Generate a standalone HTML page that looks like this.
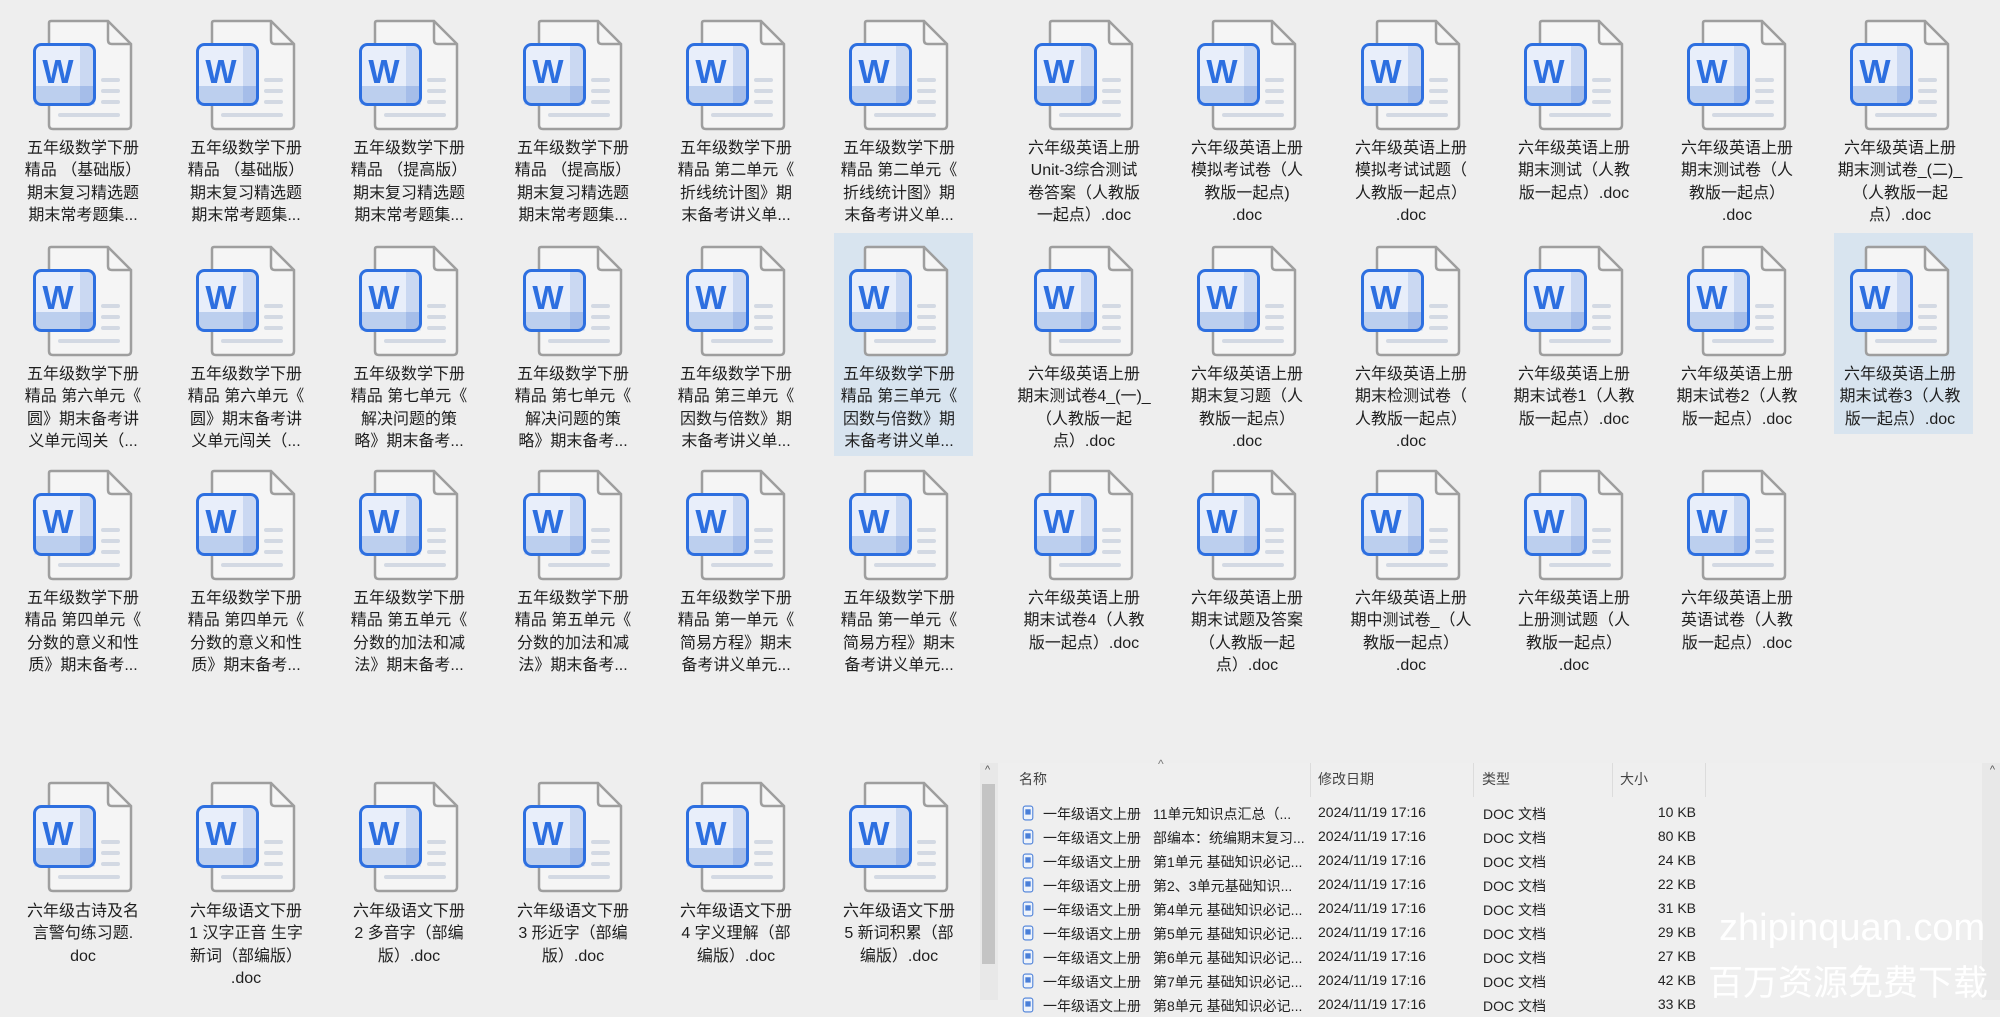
<!DOCTYPE html>
<html><head><meta charset="utf-8"><style>
html,body{margin:0;padding:0;}
body{width:2000px;height:1000px;background:#eeeeee;position:relative;overflow:hidden;font-family:"Liberation Sans","Noto Sans CJK SC",sans-serif;}
.t{position:absolute;width:150px;}
.t svg{position:absolute;left:28px;width:100px;height:112px;}
.t .l{position:absolute;left:0;width:156px;text-align:center;font-size:16px;line-height:22.3px;color:#1e1e1e;white-space:nowrap;}
.sel{position:absolute;background:#d8e4ef;}
.panel{position:absolute;left:980px;top:763px;width:1020px;height:237px;background:#efefef;}
.hd{position:absolute;top:6px;font-size:14px;color:#444;}
.sep{position:absolute;top:0;width:1px;height:34px;background:#dcdcdc;}
.row{position:absolute;left:0;width:1000px;height:24px;font-size:14px;color:#222;white-space:nowrap;}
.row span{position:absolute;top:3px;}
.row .sz{right:284px;}
.wm{position:absolute;color:#fff;font-family:"Liberation Sans","Noto Sans CJK SC",sans-serif;white-space:nowrap;}
</style></head><body>
<svg width="0" height="0" style="position:absolute">
<defs>
<symbol id="ic" viewBox="0 0 100 112">
<path d="M18 2 H75 L98 25 V106 Q98 110 94 110 H20 Q16 110 16 106 V4 Q16 2 18 2 Z" fill="#f5f5f5" stroke="#9e9e9e" stroke-width="2.5"/>
<path d="M75 2 V21 Q75 25 79 25 H98" fill="none" stroke="#9e9e9e" stroke-width="2.5"/>
<g stroke="#d3d9e3" stroke-width="4" stroke-linecap="round"><line x1="70" y1="61" x2="85" y2="61"/><line x1="70" y1="72" x2="85" y2="72"/><line x1="70" y1="83" x2="85" y2="83"/><line x1="27" y1="96" x2="85" y2="96"/></g>
<rect x="1.5" y="25.5" width="60" height="60" rx="7" fill="#e8eefa"/>
<rect x="1.5" y="67" width="60" height="18.5" fill="#bccfee"/>
<rect x="47" y="27" width="13" height="57" fill="#cad8f2"/>
<rect x="47" y="67" width="13" height="18" fill="#a5bde9"/>
<rect x="1.5" y="25.5" width="60" height="60" rx="7" fill="none" stroke="#2d6fe0" stroke-width="3"/>
<text x="25" y="64" text-anchor="middle" font-family="Liberation Sans,sans-serif" font-weight="bold" font-size="33" fill="#2d6fe0">W</text>
</symbol>
<symbol id="si" viewBox="0 0 11 15"><rect x="1" y="1" width="9" height="13" rx="2" fill="#eef3fb" stroke="#4a7fd8"/><rect x="3" y="4" width="5" height="5" fill="#4a7fd8"/></symbol>
</defs></svg>

<div class="sel" style="left:834px;top:233px;width:139px;height:223px"></div>
<div class="sel" style="left:1834px;top:233px;width:139px;height:201px"></div>

<!-- Row 1 -->
<div class="t" style="left:5px;top:19px"><svg><use href="#ic"/></svg><div class="l" style="top:119px">五年级数学下册<br>精品 （基础版）<br>期末复习精选题<br>期末常考题集...</div></div>
<div class="t" style="left:168px;top:19px"><svg><use href="#ic"/></svg><div class="l" style="top:119px">五年级数学下册<br>精品 （基础版）<br>期末复习精选题<br>期末常考题集...</div></div>
<div class="t" style="left:331px;top:19px"><svg><use href="#ic"/></svg><div class="l" style="top:119px">五年级数学下册<br>精品 （提高版）<br>期末复习精选题<br>期末常考题集...</div></div>
<div class="t" style="left:495px;top:19px"><svg><use href="#ic"/></svg><div class="l" style="top:119px">五年级数学下册<br>精品 （提高版）<br>期末复习精选题<br>期末常考题集...</div></div>
<div class="t" style="left:658px;top:19px"><svg><use href="#ic"/></svg><div class="l" style="top:119px">五年级数学下册<br>精品 第二单元《<br>折线统计图》期<br>末备考讲义单...</div></div>
<div class="t" style="left:821px;top:19px"><svg><use href="#ic"/></svg><div class="l" style="top:119px">五年级数学下册<br>精品 第二单元《<br>折线统计图》期<br>末备考讲义单...</div></div>
<div class="t" style="left:1006px;top:19px"><svg><use href="#ic"/></svg><div class="l" style="top:119px">六年级英语上册<br>Unit-3综合测试<br>卷答案（人教版<br>一起点）.doc</div></div>
<div class="t" style="left:1169px;top:19px"><svg><use href="#ic"/></svg><div class="l" style="top:119px">六年级英语上册<br>模拟考试卷（人<br>教版一起点)<br>.doc</div></div>
<div class="t" style="left:1333px;top:19px"><svg><use href="#ic"/></svg><div class="l" style="top:119px">六年级英语上册<br>模拟考试试题（<br>人教版一起点）<br>.doc</div></div>
<div class="t" style="left:1496px;top:19px"><svg><use href="#ic"/></svg><div class="l" style="top:119px">六年级英语上册<br>期末测试（人教<br>版一起点）.doc</div></div>
<div class="t" style="left:1659px;top:19px"><svg><use href="#ic"/></svg><div class="l" style="top:119px">六年级英语上册<br>期末测试卷（人<br>教版一起点）<br>.doc</div></div>
<div class="t" style="left:1822px;top:19px"><svg><use href="#ic"/></svg><div class="l" style="top:119px">六年级英语上册<br>期末测试卷_(二)_<br>（人教版一起<br>点）.doc</div></div>

<!-- Row 2 -->
<div class="t" style="left:5px;top:245px"><svg><use href="#ic"/></svg><div class="l" style="top:119px">五年级数学下册<br>精品 第六单元《<br>圆》期末备考讲<br>义单元闯关（...</div></div>
<div class="t" style="left:168px;top:245px"><svg><use href="#ic"/></svg><div class="l" style="top:119px">五年级数学下册<br>精品 第六单元《<br>圆》期末备考讲<br>义单元闯关（...</div></div>
<div class="t" style="left:331px;top:245px"><svg><use href="#ic"/></svg><div class="l" style="top:119px">五年级数学下册<br>精品 第七单元《<br>解决问题的策<br>略》期末备考...</div></div>
<div class="t" style="left:495px;top:245px"><svg><use href="#ic"/></svg><div class="l" style="top:119px">五年级数学下册<br>精品 第七单元《<br>解决问题的策<br>略》期末备考...</div></div>
<div class="t" style="left:658px;top:245px"><svg><use href="#ic"/></svg><div class="l" style="top:119px">五年级数学下册<br>精品 第三单元《<br>因数与倍数》期<br>末备考讲义单...</div></div>
<div class="t" style="left:821px;top:245px"><svg><use href="#ic"/></svg><div class="l" style="top:119px">五年级数学下册<br>精品 第三单元《<br>因数与倍数》期<br>末备考讲义单...</div></div>
<div class="t" style="left:1006px;top:245px"><svg><use href="#ic"/></svg><div class="l" style="top:119px">六年级英语上册<br>期末测试卷4_(一)_<br>（人教版一起<br>点）.doc</div></div>
<div class="t" style="left:1169px;top:245px"><svg><use href="#ic"/></svg><div class="l" style="top:119px">六年级英语上册<br>期末复习题（人<br>教版一起点）<br>.doc</div></div>
<div class="t" style="left:1333px;top:245px"><svg><use href="#ic"/></svg><div class="l" style="top:119px">六年级英语上册<br>期末检测试卷（<br>人教版一起点）<br>.doc</div></div>
<div class="t" style="left:1496px;top:245px"><svg><use href="#ic"/></svg><div class="l" style="top:119px">六年级英语上册<br>期末试卷1（人教<br>版一起点）.doc</div></div>
<div class="t" style="left:1659px;top:245px"><svg><use href="#ic"/></svg><div class="l" style="top:119px">六年级英语上册<br>期末试卷2（人教<br>版一起点）.doc</div></div>
<div class="t" style="left:1822px;top:245px"><svg><use href="#ic"/></svg><div class="l" style="top:119px">六年级英语上册<br>期末试卷3（人教<br>版一起点）.doc</div></div>

<!-- Row 3 -->
<div class="t" style="left:5px;top:469px"><svg><use href="#ic"/></svg><div class="l" style="top:119px">五年级数学下册<br>精品 第四单元《<br>分数的意义和性<br>质》期末备考...</div></div>
<div class="t" style="left:168px;top:469px"><svg><use href="#ic"/></svg><div class="l" style="top:119px">五年级数学下册<br>精品 第四单元《<br>分数的意义和性<br>质》期末备考...</div></div>
<div class="t" style="left:331px;top:469px"><svg><use href="#ic"/></svg><div class="l" style="top:119px">五年级数学下册<br>精品 第五单元《<br>分数的加法和减<br>法》期末备考...</div></div>
<div class="t" style="left:495px;top:469px"><svg><use href="#ic"/></svg><div class="l" style="top:119px">五年级数学下册<br>精品 第五单元《<br>分数的加法和减<br>法》期末备考...</div></div>
<div class="t" style="left:658px;top:469px"><svg><use href="#ic"/></svg><div class="l" style="top:119px">五年级数学下册<br>精品 第一单元《<br>简易方程》期末<br>备考讲义单元...</div></div>
<div class="t" style="left:821px;top:469px"><svg><use href="#ic"/></svg><div class="l" style="top:119px">五年级数学下册<br>精品 第一单元《<br>简易方程》期末<br>备考讲义单元...</div></div>
<div class="t" style="left:1006px;top:469px"><svg><use href="#ic"/></svg><div class="l" style="top:119px">六年级英语上册<br>期末试卷4（人教<br>版一起点）.doc</div></div>
<div class="t" style="left:1169px;top:469px"><svg><use href="#ic"/></svg><div class="l" style="top:119px">六年级英语上册<br>期末试题及答案<br>（人教版一起<br>点）.doc</div></div>
<div class="t" style="left:1333px;top:469px"><svg><use href="#ic"/></svg><div class="l" style="top:119px">六年级英语上册<br>期中测试卷_（人<br>教版一起点）<br>.doc</div></div>
<div class="t" style="left:1496px;top:469px"><svg><use href="#ic"/></svg><div class="l" style="top:119px">六年级英语上册<br>上册测试题（人<br>教版一起点）<br>.doc</div></div>
<div class="t" style="left:1659px;top:469px"><svg><use href="#ic"/></svg><div class="l" style="top:119px">六年级英语上册<br>英语试卷（人教<br>版一起点）.doc</div></div>

<!-- Bottom row -->
<div class="t" style="left:5px;top:781px"><svg><use href="#ic"/></svg><div class="l" style="top:120px">六年级古诗及名<br>言警句练习题.<br>doc</div></div>
<div class="t" style="left:168px;top:781px"><svg><use href="#ic"/></svg><div class="l" style="top:120px">六年级语文下册<br>1 汉字正音 生字<br>新词（部编版）<br>.doc</div></div>
<div class="t" style="left:331px;top:781px"><svg><use href="#ic"/></svg><div class="l" style="top:120px">六年级语文下册<br>2 多音字（部编<br>版）.doc</div></div>
<div class="t" style="left:495px;top:781px"><svg><use href="#ic"/></svg><div class="l" style="top:120px">六年级语文下册<br>3 形近字（部编<br>版）.doc</div></div>
<div class="t" style="left:658px;top:781px"><svg><use href="#ic"/></svg><div class="l" style="top:120px">六年级语文下册<br>4 字义理解（部<br>编版）.doc</div></div>
<div class="t" style="left:821px;top:781px"><svg><use href="#ic"/></svg><div class="l" style="top:120px">六年级语文下册<br>5 新词积累（部<br>编版）.doc</div></div>

<!-- Detail panel -->
<div class="panel">
  <div style="position:absolute;left:0;top:0;width:18px;height:237px;background:#e8e8e8"></div>
  <div style="position:absolute;left:5px;top:1px;font-size:11px;color:#555">^</div>
  <div style="position:absolute;left:2px;top:21px;width:13px;height:180px;background:#c4c4c4"></div>
  <div style="position:absolute;right:0;top:0;width:18px;height:237px;background:#e8e8e8"></div>
  <div style="position:absolute;right:5px;top:1px;font-size:11px;color:#555">^</div>
  <div style="position:absolute;left:178px;top:-6px;font-size:12px;color:#777">^</div>
  <div class="hd" style="left:39px">名称</div>
  <div class="sep" style="left:330px"></div>
  <div class="hd" style="left:338px">修改日期</div>
  <div class="sep" style="left:493px"></div>
  <div class="hd" style="left:502px">类型</div>
  <div class="sep" style="left:632px"></div>
  <div class="hd" style="left:640px">大小</div>
  <div class="sep" style="left:725px"></div>

  <div class="row" style="top:38px"><svg style="position:absolute;left:42px;top:4px" width="12" height="16"><use href="#si"/></svg><span style="left:63px">一年级语文上册</span><span style="left:173px">11单元知识点汇总（...</span><span style="left:338px">2024/11/19 17:16</span><span style="left:503px">DOC 文档</span><span class="sz">10 KB</span></div>
  <div class="row" style="top:62px"><svg style="position:absolute;left:42px;top:4px" width="12" height="16"><use href="#si"/></svg><span style="left:63px">一年级语文上册</span><span style="left:173px">部编本：统编期末复习...</span><span style="left:338px">2024/11/19 17:16</span><span style="left:503px">DOC 文档</span><span class="sz">80 KB</span></div>
  <div class="row" style="top:86px"><svg style="position:absolute;left:42px;top:4px" width="12" height="16"><use href="#si"/></svg><span style="left:63px">一年级语文上册</span><span style="left:173px">第1单元 基础知识必记...</span><span style="left:338px">2024/11/19 17:16</span><span style="left:503px">DOC 文档</span><span class="sz">24 KB</span></div>
  <div class="row" style="top:110px"><svg style="position:absolute;left:42px;top:4px" width="12" height="16"><use href="#si"/></svg><span style="left:63px">一年级语文上册</span><span style="left:173px">第2、3单元基础知识...</span><span style="left:338px">2024/11/19 17:16</span><span style="left:503px">DOC 文档</span><span class="sz">22 KB</span></div>
  <div class="row" style="top:134px"><svg style="position:absolute;left:42px;top:4px" width="12" height="16"><use href="#si"/></svg><span style="left:63px">一年级语文上册</span><span style="left:173px">第4单元 基础知识必记...</span><span style="left:338px">2024/11/19 17:16</span><span style="left:503px">DOC 文档</span><span class="sz">31 KB</span></div>
  <div class="row" style="top:158px"><svg style="position:absolute;left:42px;top:4px" width="12" height="16"><use href="#si"/></svg><span style="left:63px">一年级语文上册</span><span style="left:173px">第5单元 基础知识必记...</span><span style="left:338px">2024/11/19 17:16</span><span style="left:503px">DOC 文档</span><span class="sz">29 KB</span></div>
  <div class="row" style="top:182px"><svg style="position:absolute;left:42px;top:4px" width="12" height="16"><use href="#si"/></svg><span style="left:63px">一年级语文上册</span><span style="left:173px">第6单元 基础知识必记...</span><span style="left:338px">2024/11/19 17:16</span><span style="left:503px">DOC 文档</span><span class="sz">27 KB</span></div>
  <div class="row" style="top:206px"><svg style="position:absolute;left:42px;top:4px" width="12" height="16"><use href="#si"/></svg><span style="left:63px">一年级语文上册</span><span style="left:173px">第7单元 基础知识必记...</span><span style="left:338px">2024/11/19 17:16</span><span style="left:503px">DOC 文档</span><span class="sz">42 KB</span></div>
  <div class="row" style="top:230px"><svg style="position:absolute;left:42px;top:4px" width="12" height="16"><use href="#si"/></svg><span style="left:63px">一年级语文上册</span><span style="left:173px">第8单元 基础知识必记...</span><span style="left:338px">2024/11/19 17:16</span><span style="left:503px">DOC 文档</span><span class="sz">33 KB</span></div>
</div>

<div class="wm" style="left:1719px;top:907px;font-size:38px">zhipinquan.com</div>
<div class="wm" style="left:1708px;top:955px;font-size:35px">百万资源免费下载</div>
</body></html>
